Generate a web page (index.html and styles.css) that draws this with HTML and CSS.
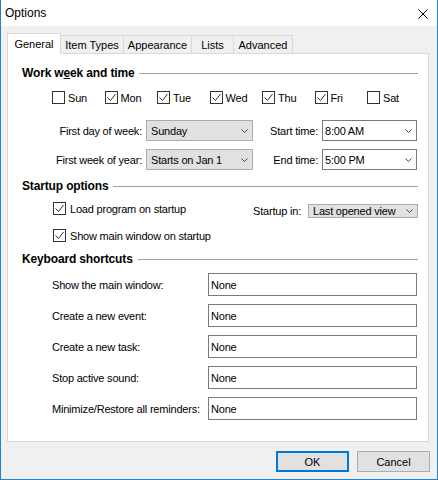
FILE: index.html
```html
<!DOCTYPE html>
<html>
<head>
<meta charset="utf-8">
<title>Options</title>
<link rel="stylesheet" href="styles.css">
</head>
<body>
<svg class="defs" width="0" height="0">
  <defs>
    <symbol id="cb-on" viewBox="0 0 13 13">
      <rect x="0.5" y="0.5" width="12" height="12" fill="#fff" stroke="#333"/>
      <polyline points="2.5,6.5 5.5,9.5 10.5,3" fill="none" stroke="#333" stroke-width="1"/>
    </symbol>
    <symbol id="cb-off" viewBox="0 0 13 13">
      <rect x="0.5" y="0.5" width="12" height="12" fill="#fff" stroke="#333"/>
    </symbol>
    <symbol id="chev" viewBox="0 0 7 4">
      <polyline points="0.5,0.5 3.5,3.5 6.5,0.5" fill="none" stroke="#444" stroke-width="1"/>
    </symbol>
  </defs>
</svg>
<div class="window">
  <div class="titlebar">
    <span class="title">Options</span>
    <svg class="close" width="10" height="10" viewBox="0 0 10 10"><path d="M0.5 0.5 L9.5 9.5 M9.5 0.5 L0.5 9.5" stroke="#000" stroke-width="1" fill="none"/></svg>
  </div>
  <div class="client">
    <div class="tabs">
      <div class="tab sel t-general">General</div>
      <div class="tab t-items">Item Types</div>
      <div class="tab t-appear">Appearance</div>
      <div class="tab t-lists">Lists</div>
      <div class="tab t-adv">Advanced</div>
    </div>
    <div class="panel">
      <div class="hdr"><span>Work w<u>e</u>ek and time</span><i class="rule"></i></div>
      <div class="days">
        <div class="cb"><svg class="box"><use href="#cb-off"/></svg>Sun</div>
        <div class="cb"><svg class="box"><use href="#cb-on"/></svg>Mon</div>
        <div class="cb"><svg class="box"><use href="#cb-on"/></svg>Tue</div>
        <div class="cb"><svg class="box"><use href="#cb-on"/></svg>Wed</div>
        <div class="cb"><svg class="box"><use href="#cb-on"/></svg>Thu</div>
        <div class="cb"><svg class="box"><use href="#cb-on"/></svg>Fri</div>
        <div class="cb"><svg class="box"><use href="#cb-off"/></svg>Sat</div>
      </div>
      <div class="weekgrid">
        <span class="lbl">First day of week:</span>
        <div class="dd"><span>Sunday</span><svg class="chev"><use href="#chev"/></svg></div>
        <span class="lbl">Start time:</span>
        <div class="dd white"><span>8:00 AM</span><svg class="chev"><use href="#chev"/></svg></div>
        <span class="lbl">First week of year:</span>
        <div class="dd"><span>Starts on Jan 1</span><svg class="chev"><use href="#chev"/></svg></div>
        <span class="lbl">End time:</span>
        <div class="dd white"><span>5:00 PM</span><svg class="chev"><use href="#chev"/></svg></div>
      </div>
      <div class="hdr hdr2"><span>Startup options</span><i class="rule"></i></div>
      <div class="startrow">
        <div class="cb wide"><svg class="box"><use href="#cb-on"/></svg>Load program on startup</div>
        <span class="startlbl">Startup in:</span>
        <div class="dd startin"><span>Last opened view</span><svg class="chev"><use href="#chev"/></svg></div>
      </div>
      <div class="cb wide showrow"><svg class="box"><use href="#cb-on"/></svg>Show main window on startup</div>
      <div class="hdr hdr3"><span>Keyboard shortcuts</span><i class="rule"></i></div>
      <div class="keys">
        <span class="klbl">Show the main window:</span><div class="inp">None</div>
        <span class="klbl">Create a new event:</span><div class="inp">None</div>
        <span class="klbl">Create a new task:</span><div class="inp">None</div>
        <span class="klbl">Stop active sound:</span><div class="inp">None</div>
        <span class="klbl">Minimize/Restore all reminders:</span><div class="inp">None</div>
      </div>
    </div>
    <div class="buttons">
      <div class="btn ok">OK</div>
      <div class="btn">Cancel</div>
    </div>
  </div>
</div>
</body>
</html>
```

FILE: styles.css
```css
html, body {
  margin: 0;
  padding: 0;
  background: #fff;
}

.defs {
  position: absolute;
  width: 0;
  height: 0;
  overflow: hidden;
}

.window {
  width: 438px;
  height: 480px;
  box-sizing: border-box;
  border: 1px solid #1883d7;
  border-top: none;
  background: #f0f0f0;
  display: flex;
  flex-direction: column;
  font-family: "Liberation Sans", Arial, sans-serif;
  font-size: 11px;
  letter-spacing: -0.2px;
  color: #000;
}

.titlebar {
  height: 26px;
  flex: none;
  background: #fff;
  display: flex;
  align-items: center;
  padding: 0 9px 0 4px;
}

.title {
  flex: 1;
  font-size: 12px;
  letter-spacing: 0;
}

.close {
  display: block;
  margin-top: 1px;
}

.client {
  padding: 7px 7px 0 6px;
  display: flex;
  flex-direction: column;
}

.tabs {
  display: flex;
  align-items: flex-end;
  height: 20px;
}

.tab {
  box-sizing: border-box;
  height: 18px;
  border: 1px solid #d9d9d9;
  border-bottom: none;
  background: #f0f0f0;
  display: flex;
  align-items: center;
  justify-content: center;
  margin-left: -1px;
  letter-spacing: 0;
}

.tab.sel {
  height: 21px;
  margin-bottom: -1px;
  background: #fff;
  position: relative;
  z-index: 1;
}

.t-general { width: 54px; margin-left: 0; }
.t-items { width: 64px; }
.t-appear { width: 69px; }
.t-lists { width: 43px; }
.t-adv { width: 60px; }

.panel {
  box-sizing: border-box;
  width: 422px;
  height: 389px;
  background: #fff;
  border: 1px solid #d9d9d9;
  padding: 12px 10px 0 14px;
  display: flex;
  flex-direction: column;
}

.hdr {
  display: flex;
  align-items: center;
  height: 14px;
  font-weight: bold;
  font-size: 12px;
  letter-spacing: -0.15px;
}

.hdr u {
  text-decoration-thickness: 1px;
}

.hdr .rule {
  flex: 1;
  height: 0;
  border-top: 1px solid #a0a0a0;
  margin-left: 5px;
}

.hdr2 { margin-top: 9px; }
.hdr3 { margin-top: 10px; }

.days {
  display: grid;
  grid-template-columns: repeat(7, 52.5px);
  margin: 11px 0 0 30px;
  height: 13px;
}

.cb {
  display: flex;
  align-items: center;
  gap: 3px;
  height: 13px;
}

.cb.wide { gap: 4px; }

.box {
  width: 13px;
  height: 13px;
  flex: none;
  display: block;
}

.weekgrid {
  display: grid;
  grid-template-columns: 120px 107px 61px 95px;
  grid-auto-rows: 21px;
  column-gap: 4px;
  row-gap: 8px;
  margin-top: 16px;
}

.lbl {
  text-align: right;
  align-self: center;
}

.dd {
  box-sizing: border-box;
  border: 1px solid #adadad;
  background: #e1e1e1;
  display: flex;
  align-items: center;
  justify-content: space-between;
  padding: 0 4px 0 4px;
  white-space: nowrap;
}

.dd.white {
  background: #fff;
  border-color: #7a7a7a;
  padding-left: 2px;
}

.chev {
  width: 7px;
  height: 4px;
  flex: none;
  display: block;
}

.startrow {
  display: flex;
  align-items: center;
  height: 21px;
  margin-top: 7px;
  padding-left: 31px;
}

.startrow .cb {
  flex: 1;
  align-self: flex-start;
  margin-top: 2px;
}

.startlbl { margin-right: 7px; }

.dd.startin { width: 110px; }

.showrow { margin: 8px 0 0 31px; }

.keys {
  display: grid;
  grid-template-columns: 156px 209px;
  grid-template-rows: 23px 23px 23px 23px 23px;
  row-gap: 8px;
  margin: 7px 0 0 30px;
}

.klbl { align-self: center; }

.inp {
  box-sizing: border-box;
  border: 1px solid #7a7a7a;
  background: #fff;
  padding-left: 2px;
  display: flex;
  align-items: center;
}

.buttons {
  display: flex;
  justify-content: flex-end;
  gap: 8px;
  margin-top: 9px;
}

.btn {
  box-sizing: border-box;
  width: 73px;
  height: 21px;
  border: 1px solid #adadad;
  background: #e1e1e1;
  display: flex;
  align-items: center;
  justify-content: center;
  letter-spacing: 0;
}

.btn.ok { border: 2px solid #0078d7; }
```
